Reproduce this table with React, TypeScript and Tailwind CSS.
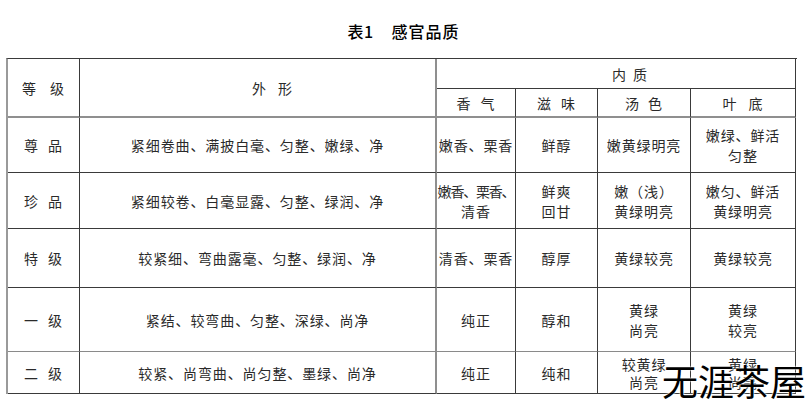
import React from "react";

const font = { fontFamily: '"Noto Sans CJK SC", "Noto Sans", sans-serif' };

function Cell({
  children,
  className = "",
}: {
  children?: React.ReactNode;
  className?: string;
}) {
  return (
    <div
      className={
        "flex flex-col items-center justify-center text-center text-[14px] leading-[20px] tracking-[0.9px] text-[#2a2a2a] border-r border-b border-r-[#3a3a3a] border-b-[#3a3a3a] " +
        className
      }
    >
      {children}
    </div>
  );
}

function Pair({ a, b, gap }: { a: string; b: string; gap: string }) {
  return (
    <div className={"flex " + gap}>
      <span>{a}</span>
      <span>{b}</span>
    </div>
  );
}

export default function App() {
  const rows: {
    grade: [string, string];
    shape: string;
    aroma: React.ReactNode;
    taste: React.ReactNode;
    color: React.ReactNode;
    leaf: React.ReactNode;
    rowClass: string;
  }[] = [
    {
      grade: ["尊", "品"],
      shape: "紧细卷曲、满披白毫、匀整、嫩绿、净",
      aroma: <span>嫩香、栗香</span>,
      taste: <span>鲜醇</span>,
      color: <span>嫩黄绿明亮</span>,
      leaf: (
        <>
          <span>嫩绿、鲜活</span>
          <span>匀整</span>
        </>
      ),
      rowClass: "",
    },
    {
      grade: ["珍", "品"],
      shape: "紧细较卷、白毫显露、匀整、绿润、净",
      aroma: (
        <>
          <span className="tracking-[-1.2px] whitespace-nowrap">嫩香、栗香、</span>
          <span>清香</span>
        </>
      ),
      taste: (
        <>
          <span>鲜爽</span>
          <span>回甘</span>
        </>
      ),
      color: (
        <>
          <span>嫩（浅）</span>
          <span>黄绿明亮</span>
        </>
      ),
      leaf: (
        <>
          <span>嫩匀、鲜活</span>
          <span>黄绿明亮</span>
        </>
      ),
      rowClass: "",
    },
    {
      grade: ["特", "级"],
      shape: "较紧细、弯曲露毫、匀整、绿润、净",
      aroma: <span className="whitespace-nowrap">清香、栗香</span>,
      taste: <span>醇厚</span>,
      color: <span>黄绿较亮</span>,
      leaf: <span>黄绿较亮</span>,
      rowClass: "",
    },
    {
      grade: ["一", "级"],
      shape: "紧结、较弯曲、匀整、深绿、尚净",
      aroma: <span>纯正</span>,
      taste: <span>醇和</span>,
      color: (
        <>
          <span>黄绿</span>
          <span>尚亮</span>
        </>
      ),
      leaf: (
        <>
          <span>黄绿</span>
          <span>较亮</span>
        </>
      ),
      rowClass: "border-b-[#8a8a8a]",
    },
    {
      grade: ["二", "级"],
      shape: "较紧、尚弯曲、尚匀整、墨绿、尚净",
      aroma: <span>纯正</span>,
      taste: <span>纯和</span>,
      color: (
        <div className="flex flex-col leading-[18px]">
          <span>较黄绿</span>
          <span>尚亮</span>
        </div>
      ),
      leaf: (
        <div className="flex flex-col leading-[18px]">
          <span>黄绿</span>
          <span>尚亮</span>
        </div>
      ),
      rowClass: "",
    },
  ];

  return (
    <div className="relative w-[805px] h-[402px] bg-white overflow-hidden" style={font}>
      <div className="h-[58px] flex items-center justify-center pt-[4px] pl-[2px]">
        <span className="text-[16px] text-black font-medium tracking-[0.5px]">表1</span>
        <span className="ml-[18px] text-[16px] text-black font-medium tracking-[1px]">
          感官品质
        </span>
      </div>
      <div className="ml-[6px] w-[791px] border-t border-t-[#3a3a3a] border-l-2 border-l-[#9a9a9a] grid grid-cols-[72px_357px_79px_82px_93px_105px] grid-rows-[30px_29px_55px_56px_59px_64px_42px]">
        <Cell className="row-span-2 border-b-2 border-b-[#8f8f8f]">
          <Pair a="等" b="级" gap="gap-[13px]" />
        </Cell>
        <Cell className="row-span-2 border-b-2 border-b-[#8f8f8f] border-r-2 border-r-[#8f8f8f] pl-[30px]">
          <Pair a="外" b="形" gap="gap-[11px]" />
        </Cell>
        <Cell className="col-span-4 pl-[28px]">
          <Pair a="内" b="质" gap="gap-[6px]" />
        </Cell>
        <Cell className="border-b-2 border-b-[#8f8f8f]">
          <Pair a="香" b="气" gap="gap-[9px]" />
        </Cell>
        <Cell className="border-b-2 border-b-[#8f8f8f]">
          <Pair a="滋" b="味" gap="gap-[9px]" />
        </Cell>
        <Cell className="border-b-2 border-b-[#8f8f8f]">
          <Pair a="汤" b="色" gap="gap-[8px]" />
        </Cell>
        <Cell className="border-b-2 border-b-[#8f8f8f]">
          <Pair a="叶" b="底" gap="gap-[11px]" />
        </Cell>
        {rows.map((r, i) => (
          <React.Fragment key={i}>
            <Cell className={r.rowClass}>
              <Pair a={r.grade[0]} b={r.grade[1]} gap="gap-[9px]" />
            </Cell>
            <Cell className={"border-r-2 border-r-[#8f8f8f] " + r.rowClass}>
              <span>{r.shape}</span>
            </Cell>
            <Cell className={r.rowClass}>{r.aroma}</Cell>
            <Cell className={r.rowClass}>{r.taste}</Cell>
            <Cell className={r.rowClass}>{r.color}</Cell>
            <Cell className={r.rowClass}>{r.leaf}</Cell>
          </React.Fragment>
        ))}
      </div>
      <div
        className="absolute left-[662px] top-[362px] text-[36px] leading-none text-black font-normal whitespace-nowrap"
        style={{ textShadow: "0 0 2px #fff, 0 0 2px #fff" }}
      >
        无涯茶屋
      </div>
    </div>
  );
}
